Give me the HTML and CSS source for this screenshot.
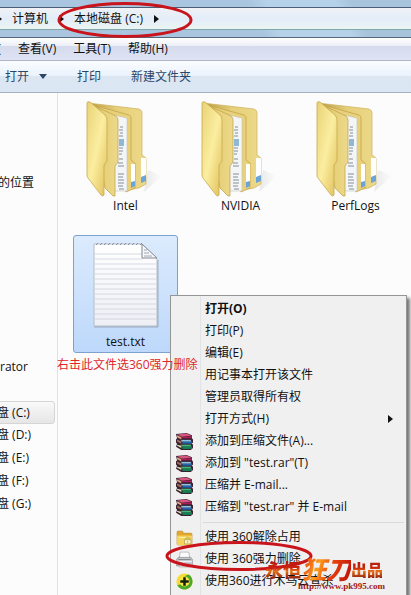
FILE: index.html
```html
<!DOCTYPE html>
<html lang="zh-CN">
<head>
<meta charset="utf-8">
<title>本地磁盘 (C:)</title>
<link rel="stylesheet" href="styles.css">
</head>
<body>
<svg class="defs" aria-hidden="true">
  <defs>
    <linearGradient id="gFront" x1="0" y1="0" x2="1" y2="1"><stop offset="0" stop-color="#e9d277"/><stop offset=".5" stop-color="#fbeea0"/><stop offset="1" stop-color="#dfbd55"/></linearGradient>
    <linearGradient id="gBack" x1="0" y1="0" x2="1" y2="0"><stop offset="0" stop-color="#b89a45"/><stop offset=".5" stop-color="#e6cf78"/><stop offset="1" stop-color="#ecd98a"/></linearGradient>
    <linearGradient id="gShade" x1="0" y1="0" x2="1" y2="0"><stop offset="0" stop-color="#ccc"/><stop offset="1" stop-color="#fcfcfc"/></linearGradient>
    <linearGradient id="gPage" x1="0" y1="0" x2="0" y2="1"><stop offset="0" stop-color="#fff"/><stop offset="1" stop-color="#eeeff5"/></linearGradient>
    <symbol id="folder" viewBox="0 0 80 98">
      <path d="M58 92 76 76 62 70z" fill="url(#gShade)" opacity=".4"/>
      <path d="M2 3 53 9q3 1 3 4v42l4 3v26l-7 4-12 2z" fill="url(#gBack)" stroke="#cdb05a" stroke-width=".7"/>
      <path d="M55 58h5v22l-5 2z" fill="#fff"/><path d="M55 77l5-2v6l-5 2z" fill="#6aa4d8"/>
      <path d="M3 4 43 15q2 1 2 3v42l4 3v25l-9 4z" fill="#e8d17a" stroke="#bf9f46" stroke-width=".7"/>
      <path d="M45 64h4v19l-4 1z" fill="#fff"/><path d="M45 82l4-1v5l-4 2z" fill="#6aa4d8"/>
      <path d="M14 12 41 18v73H29z" fill="#f3f5f7" stroke="#c2c2b8" stroke-width=".6"/>
      <path d="M34 27h3M33 30h4M34 33h3M33 36h4M33 48h4M33 51h4M33 54h3M33 59h4M32 63h5M32 66h6M32 74h6M32 77h5M32 80h6M32 83h6M32 86h5M33 89h5" stroke="#788490" stroke-width=".9"/>
      <path d="M33 39h5v7h-5z" fill="#8fb9d2"/>
      <path d="M3 3 30 16q2 2 2 4v42l-3 4v30H27L19 88z" fill="url(#gBack)" stroke="#bd9e45" stroke-width=".7"/>
      <path d="M1 3q0-2 3-1l15 13q2 2 2 5v41l-3 4v30q-1 2-3 0L2 78q-1-1-1-3z" fill="url(#gFront)" stroke="#c8a94f" stroke-width=".8"/>
    </symbol>
    <symbol id="notepad" viewBox="0 0 68 88">
      <path d="M2 3h48l15 15v67H2z" fill="url(#gPage)" stroke="#b4bcc6"/>
      <path d="M2 86h64V19" fill="none" stroke="#7e8c9c" opacity=".6"/>
      <path d="M3 18h48M3 23h61M3 28h61M3 33h61M3 38h61M3 43h61M3 48h61M3 53h61M3 58h61M3 63h61M3 68h61M3 73h61M3 78h61M3 13h47" stroke="#ccd2da" stroke-width=".8"/>
      <path d="M4 4l2-2M8 4l2-2M12 4l2-2M16 4l2-2M20 4l2-2M24 4l2-2M28 4l2-2M32 4l2-2M36 4l2-2M40 4l2-2M44 4l2-2M48 4l2-2" stroke="#868f99"/>
      <path d="M50 3v14h15z" fill="#f5f7fa" stroke="#7f8890"/><path d="M52 9h3M52 12h5M52 15h8" stroke="#8d969e" stroke-width=".8"/>
    </symbol>
    <symbol id="rar" viewBox="0 0 16 16">
      <path d="M0 1 10 0l5 2v3l1 1v3l-1 1 1 1v3l-2 2H5L0 13l1-3-1-1V6l1-1z" fill="#3a2233"/>
      <path d="M1 1.500 10 .5l4.500 2-9 1z" fill="#d8557e"/><path d="M5 4l10-1v2H6z" fill="#b01a58"/><path d="M1 2l4 2v2L1 4z" fill="#e3a47c"/>
      <path d="M6 8h9v2H6z" fill="#1f66b4"/><path d="M5 6.500h9V8H5z" fill="#8fc2e2"/><path d="M1 6l4 2v2L1 8z" fill="#a8705a"/>
      <path d="M6 12.500h9V15H6z" fill="#128052"/><path d="M5 11h9v1.500H5z" fill="#45b57c"/><path d="M1 11l4 1v2l-4-2z" fill="#e0dcae"/>
    </symbol>
    <symbol id="unlock" viewBox="0 0 16 16">
      <path d="M1 3q0-1 1-1h4l1 2h7q1 0 1 1v9q0 1-1 1H2q-1 0-1-1z" fill="#e4a72b" stroke="#b8821e" stroke-width=".6"/>
      <path d="M1 6h14v8q0 1-1 1H2q-1 0-1-1z" fill="#f5d35d"/><path d="M3 8h6" stroke="#fff3b4"/>
      <path d="M8 10h6v4H8z" fill="#f9f4d2" stroke="#b9a04a" stroke-width=".7"/><path d="M9 10V9q2-2 4 0v1M11 11v2" fill="none" stroke="#a9a552" stroke-width=".8"/>
    </symbol>
    <symbol id="shredder" viewBox="0 0 16 16">
      <path d="M4 1h8l1 6H3z" fill="#fcfcfc" stroke="#aaa" stroke-width=".7"/>
      <path d="M2 6h12l2 3v4q0 1-1 1H1q-1 0-1-1V9z" fill="#c5c8cc" stroke="#8a8e92" stroke-width=".7"/>
      <path d="M2 8h12" stroke="#888"/><path d="M1 10h14" stroke="#f3f3f3"/><path d="M3 12h10v3H3z" fill="#eee" stroke="#999" stroke-width=".6"/>
    </symbol>
    <symbol id="plus" viewBox="0 0 16 16">
      <circle cx="8" cy="8" r="7.600" fill="#f4dc35"/><path d="M12 1.500A7.600 7.600 0 1 1 1 11q3 1 4-3 1-5 7-6.500z" fill="#4aa92a"/>
      <circle cx="8" cy="8" r="4.800" fill="#fae84a"/><path d="M8 4v8M4 8h8" stroke="#171f0c" stroke-width="2.400"/>
    </symbol>
    <symbol id="arrow" viewBox="0 0 5 8"><path d="M0 0l5 4-5 4z" fill="currentColor"/></symbol>
  </defs>
</svg>

<main class="window">
  <header class="address">
    <nav class="crumbs" aria-label="地址">
      <svg class="arrow lead"><use href="#arrow"/></svg>
      <a href="#">计算机</a>
      <svg class="arrow"><use href="#arrow"/></svg>
      <a href="#">本地磁盘 (C:)</a>
      <svg class="arrow"><use href="#arrow"/></svg>
    </nav>
  </header>
  <nav class="menubar" aria-label="菜单栏">
    <span class="cut">)</span>
    <button>查看(V)</button>
    <button>工具(T)</button>
    <button>帮助(H)</button>
  </nav>
  <div class="toolbar">
    <button class="open">打开<svg class="caret" viewBox="0 0 8 5"><path d="M0 0h8L4 5z"/></svg></button>
    <button class="print">打印</button>
    <button>新建文件夹</button>
  </div>

  <div class="body">
    <aside class="sidebar">
      <a class="recent" href="#">的位置</a>
      <a class="user" href="#">rator</a>
      <nav class="drives" aria-label="磁盘">
        <a class="current" href="#">盘 (C:)</a>
        <a href="#">盘 (D:)</a>
        <a href="#">盘 (E:)</a>
        <a href="#">盘 (F:)</a>
        <a href="#">盘 (G:)</a>
      </nav>
    </aside>
    <section class="files">
      <a class="item" href="#"><svg class="folder"><use href="#folder"/></svg>Intel</a>
      <a class="item" href="#"><svg class="folder"><use href="#folder"/></svg>NVIDIA</a>
      <a class="item" href="#"><svg class="folder"><use href="#folder"/></svg>PerfLogs</a>
      <a class="item selected" href="#"><svg class="note"><use href="#notepad"/></svg>test.txt</a>
    </section>
  </div>

  <div class="context" role="menu">
    <button role="menuitem"><i></i><b>打开(O)</b></button>
    <button role="menuitem"><i></i>打印(P)</button>
    <button role="menuitem"><i></i>编辑(E)</button>
    <button role="menuitem"><i></i>用记事本打开该文件</button>
    <button role="menuitem"><i></i>管理员取得所有权</button>
    <button role="menuitem"><i></i>打开方式(H)<svg class="arrow more"><use href="#arrow"/></svg></button>
    <button role="menuitem"><i><svg><use href="#rar"/></svg></i>添加到压缩文件(A)...</button>
    <button role="menuitem"><i><svg><use href="#rar"/></svg></i>添加到 "test.rar"(T)</button>
    <button role="menuitem"><i><svg><use href="#rar"/></svg></i>压缩并 E-mail...</button>
    <button role="menuitem"><i><svg><use href="#rar"/></svg></i>压缩到 "test.rar" 并 E-mail</button>
    <hr>
    <button role="menuitem"><i><svg><use href="#unlock"/></svg></i>使用 360解除占用</button>
    <button role="menuitem"><i><svg><use href="#shredder"/></svg></i>使用 360强力删除</button>
    <button role="menuitem"><i><svg><use href="#plus"/></svg></i>使用360进行木马云查杀</button>
  </div>

  <p class="note-text">右击此文件选360强力删除</p>
  <svg class="ring ring-path" viewBox="0 0 136 38"><ellipse cx="68" cy="19" rx="66" ry="16.500"/></svg>
  <svg class="ring ring-item" viewBox="0 0 148 32"><ellipse cx="74" cy="16" rx="72" ry="13.500"/></svg>
  <div class="stamp">
    <div class="stamp-name"><span class="s1">永恒</span><span class="s2">狂刀</span><span class="s3">出品</span></div>
    <div class="stamp-url">http://www.pk995.com</div>
  </div>
</main>
</body>
</html>
```
FILE: styles.css
```css
* { box-sizing: border-box; }

body {
  margin: 0;
  background: #fcfcfc;
  color: #111;
  font: 12px/22px "Open Sans", "Noto Sans CJK SC", sans-serif;
}

a { color: inherit; text-decoration: none; }

button {
  padding: 0;
  border: 0;
  background: none;
  color: inherit;
  font: inherit;
  white-space: nowrap;
}

.defs { position: absolute; width: 0; height: 0; }

.window {
  position: relative;
  display: flex;
  flex-direction: column;
  min-height: 100vh;
  overflow: hidden;
}

.arrow { flex: none; width: 5px; height: 8px; }

/* Address bar */
.address {
  padding: 7px 0;
  border-bottom: 1px solid #55677b;
  background: linear-gradient(65deg, #a9c5df 0 62%, #b6d2eb 66% 82%, #a8c3dc 86%);
}

.crumbs {
  display: flex;
  align-items: center;
  height: 23px;
  border-top: 1px solid #4b6077;
  border-bottom: 1px solid #82a7a7;
  background: linear-gradient(#f0f2f5, #e3edf9 50%, #ebf5f3);
}

.crumbs a { margin-right: 11px; }
.crumbs .arrow { margin-right: 10px; }
.crumbs .lead { margin-left: -3px; }

/* Menu bar and toolbar */
.menubar {
  display: flex;
  align-items: center;
  gap: 17px;
  height: 23px;
  border-bottom: 1px solid #b2b7c8;
  background: linear-gradient(#fff, #eceef6 8px, #d5daec 8px, #dfe4f5);
}

.menubar button { line-height: 24px; }
.cut { width: 1px; direction: rtl; }

.toolbar {
  display: flex;
  align-items: center;
  height: 32px;
  padding-left: 5px;
  border-bottom: 1px solid #a5b2c0;
  background: linear-gradient(#fbfdff, #eaf2fc 15px, #dce6f3 15px, #dbe6f4);
  color: #2c4667;
}

.toolbar .open { display: flex; align-items: center; gap: 10px; margin-right: 30px; }
.toolbar .print { margin-right: 30px; }
.caret { width: 8px; height: 5px; fill: #2c4667; }

/* Folder tree */
.body { display: flex; flex: 1; }

.sidebar {
  flex: none;
  width: 58px;
  padding-top: 79px;
  border-right: 1px solid #d3e7ec;
  overflow: hidden;
}

.sidebar a { display: block; height: 23px; white-space: nowrap; }
.recent { margin: 0 0 161px -2px; }
.user { margin-bottom: 22px; }
.drives { margin: 0 2px 0 -3px; }
.drives .current {
  border: 1px solid #d5d5d5;
  border-radius: 3px;
  background: linear-gradient(#f9f9f9, #e6e6e6);
  margin-left: -1px;
}

/* Files */
.files {
  display: grid;
  grid-template-columns: repeat(3, 115px);
  grid-auto-rows: 118px;
  row-gap: 17px;
  align-content: start;
  flex: 1;
  min-width: 0;
  padding: 7px 0 0 10px;
}

.item { display: flex; flex-direction: column; align-items: center; line-height: 16px; }
.folder { width: 80px; height: 98px; }
.note { width: 68px; height: 88px; margin: 5px 0; }
.selected {
  justify-self: center;
  width: 105px;
  border: 1px solid #7da2ce;
  border-radius: 3px;
  background: linear-gradient(#dcebfd, #bdd8fb);
}

/* Context menu */
.context {
  position: absolute;
  top: 295px;
  left: 170px;
  display: flex;
  flex-direction: column;
  width: 237px;
  height: 310px;
  padding: 2px;
  border: 1px solid #959595;
  background: linear-gradient(90deg, #f0f0f0 29px, #e1e3e4 29px 30px, #f0f0f0 30px);
  box-shadow: 3px 3px 3px #777;
}

.context button { display: flex; align-items: center; height: 22px; text-align: left; }
.context i { flex: none; display: flex; width: 32px; padding-left: 3px; }
.context i svg { width: 17px; height: 17px; }
.context hr {
  height: 1px;
  margin: 4px 0 3px 30px;
  border: 0;
  background: #d9d9d9;
}
.more { margin: 0 11px 0 auto; }

/* Annotations */
.note-text { position: absolute; top: 354px; left: 57px; margin: 0; color: #e0262b; }
.ring { position: absolute; fill: none; stroke: #c9141b; stroke-width: 3; }
.ring-path { top: 1px; left: 57px; width: 136px; height: 38px; }
.ring-item { top: 540px; left: 165px; width: 148px; height: 32px; }

.stamp { position: absolute; top: 555px; left: 265px; width: 120px; }
.stamp-name {
  display: flex;
  align-items: center;
  height: 27px;
  font-family: "Noto Sans CJK SC", sans-serif;
  font-weight: 900;
}
.stamp-name span {
  background: linear-gradient(#a8140b, #c9260d 45%, #e8741a 60%, #7e0b08);
  background-clip: text;
  color: transparent;
}
.s1 { font-size: 18px; }
.stamp-name .s2 {
  background-image: linear-gradient(110deg, #e32a0a, #fb9c1c 35%, #e8400d 60%, #b70f08);
  font-size: 25px;
  line-height: 27px;
  font-style: italic;
}
.s3 { font-size: 16px; }
.stamp-url {
  color: #a01713;
  font: bold 9px/8px "Liberation Serif", serif;
  text-align: right;
}
```
